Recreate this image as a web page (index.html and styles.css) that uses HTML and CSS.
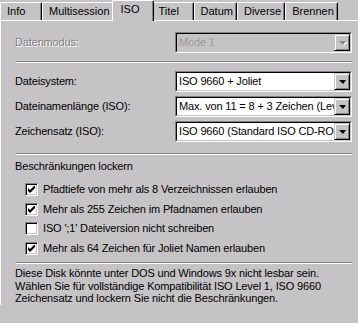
FILE: index.html
```html
<!DOCTYPE html>
<html lang="de">
<head>
    <meta charset="UTF-8">
    <title>ISO</title>
    <link rel="stylesheet" href="styles.css">
</head>
<body>
    <div class="tabs">
        <div class="tab">Info</div>
        <div class="tab">Multisession</div>
        <div class="tab active">ISO</div>
        <div class="tab">Titel</div>
        <div class="tab">Datum</div>
        <div class="tab">Diverse</div>
        <div class="tab">Brennen</div>
    </div>

    <div class="panel">
        <div class="field">
            <label class="disabled">Datenmodus:</label>
            <div class="combo off">
                <div class="combo-in">
                    <span class="value">Mode 1</span>
                    <span class="drop"><span class="arrow"></span></span>
                </div>
            </div>
        </div>

        <div class="sep sep-top"></div>

        <div class="fields">
            <div class="field">
                <label>Dateisystem:</label>
                <div class="combo">
                    <div class="combo-in">
                        <span class="value">ISO 9660 + Joliet</span>
                        <span class="drop"><span class="arrow"></span></span>
                    </div>
                </div>
            </div>
            <div class="field">
                <label>Dateinamenlänge (ISO):</label>
                <div class="combo">
                    <div class="combo-in">
                        <span class="value">Max. von 11 = 8 + 3 Zeichen (Level 1)</span>
                        <span class="drop"><span class="arrow"></span></span>
                    </div>
                </div>
            </div>
            <div class="field">
                <label>Zeichensatz (ISO):</label>
                <div class="combo">
                    <div class="combo-in">
                        <span class="value">ISO 9660 (Standard ISO CD-ROM)</span>
                        <span class="drop"><span class="arrow"></span></span>
                    </div>
                </div>
            </div>
        </div>

        <div class="sep sep-mid"></div>

        <div class="group-title">Beschränkungen lockern</div>
        <div class="checks">
            <div class="check">
                <span class="box"><svg width="7" height="7" viewBox="0 0 7 7"><path d="M0 2v3l2 2 5-5V-1L2 4z" fill="#000"/></svg></span>
                Pfadtiefe von mehr als 8 Verzeichnissen erlauben
            </div>
            <div class="check">
                <span class="box"><svg width="7" height="7" viewBox="0 0 7 7"><path d="M0 2v3l2 2 5-5V-1L2 4z" fill="#000"/></svg></span>
                Mehr als 255 Zeichen im Pfadnamen erlauben
            </div>
            <div class="check">
                <span class="box"></span>
                ISO ';1' Dateiversion nicht schreiben
            </div>
            <div class="check">
                <span class="box"><svg width="7" height="7" viewBox="0 0 7 7"><path d="M0 2v3l2 2 5-5V-1L2 4z" fill="#000"/></svg></span>
                Mehr als 64 Zeichen für Joliet Namen erlauben
            </div>
        </div>

        <div class="sep sep-bottom"></div>

        <p class="note">Diese Disk könnte unter DOS und Windows 9x nicht lesbar sein.<br>
        Wählen Sie für vollständige Kompatibilität ISO Level 1, ISO 9660<br>
        Zeichensatz und lockern Sie nicht die Beschränkungen.</p>
    </div>
</body>
</html>
```

FILE: styles.css
```css
body { margin: 0; width: 358px; height: 323px; overflow: hidden; background: #c6c3c6; font-family: "Liberation Sans", Arial, sans-serif; font-size: 11px; line-height: 13px; letter-spacing: -0.15px; color: #000; }

.tabs { display: flex; height: 20px; align-items: flex-end; }
.tab { min-width: 42px; height: 18px; box-sizing: border-box; padding: 2px 3px 0 6px; border-left: 1px solid #fff; border-top: 1px solid #fff; border-right: 1px solid #000; box-shadow: inset -1px 0 #848284; border-radius: 2px 2px 0 0; background: #c6c3c6; letter-spacing: 0; }
.tab.active { height: 21px; margin: 0 -2px -1px; padding: 2px 5px 0 8px; position: relative; z-index: 1; }

.panel { border-top: 1px solid #fff; border-left: 1px solid #fff; padding: 11px 6px 0 14px; }

.field { display: grid; grid-template-columns: 160px minmax(0, 1fr); align-items: center; height: 21px; }
.fields { display: flex; flex-direction: column; gap: 4px; }
.disabled { color: #848284; text-shadow: 1px 1px 0 #fff; }

.combo { min-width: 0; height: 21px; box-sizing: border-box; border: 1px solid; border-color: #848284 #fff #fff #848284; }
.combo-in { display: flex; height: 19px; box-sizing: border-box; border: 1px solid; border-color: #000 #c6c3c6 #c6c3c6 #000; background: #fff; }
.value { flex: 1; min-width: 0; padding-left: 2px; line-height: 17px; white-space: nowrap; overflow: hidden; }
.drop { flex: none; width: 16px; height: 17px; box-sizing: border-box; border: 1px solid; border-color: #c6c3c6 #000 #000 #c6c3c6; box-shadow: inset 1px 1px #fff, inset -1px -1px #848284; background: #c6c3c6; display: flex; align-items: center; justify-content: center; }
.arrow { width: 0; height: 0; border-left: 4px solid transparent; border-right: 3px solid transparent; border-top: 4px solid #000; margin-top: 1px; }

.combo.off .combo-in { background: #c6c3c6; }
.combo.off .value { color: #9c9a9c; }
.combo.off .arrow { border-top-color: #848284; filter: drop-shadow(1px 1px 0 #fff); }

.sep { border-top: 1px solid #848284; border-bottom: 1px solid #fff; }
.sep-top { margin: 8px 0 8px 1px; }
.sep-mid { margin: 11px 0 5px 1px; }
.sep-bottom { margin: 4px 0 3px 1px; }

.group-title { height: 13px; }
.checks { margin-top: 7px; padding-left: 10px; }
.check { height: 19.5px; display: flex; align-items: center; gap: 5px; }
.box { flex: none; width: 13px; height: 13px; box-sizing: border-box; border: 1px solid; border-color: #848284 #fff #fff #848284; box-shadow: inset 1px 1px #000, inset -1px -1px #c6c3c6; background: #fff; display: flex; align-items: center; justify-content: center; }

.note { margin: 0; line-height: 12.5px; }
```
